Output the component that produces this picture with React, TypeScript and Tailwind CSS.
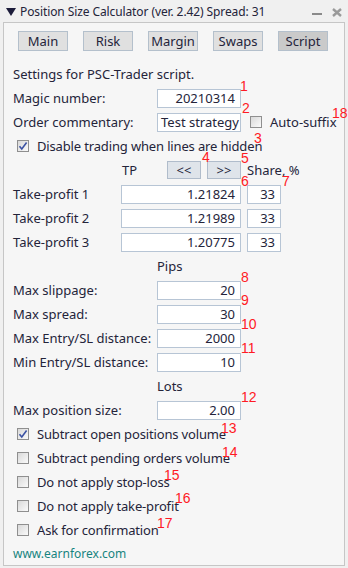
import type { ReactNode } from 'react';

const tabs = ['Main', 'Risk', 'Margin', 'Swaps', 'Script'];

function Check({ checked = false }: { checked?: boolean }) {
  return (
    <span className="flex h-[12px] w-[12px] shrink-0 items-center justify-center border border-[#8f8f8f] bg-gradient-to-br from-[#d9d9d9] to-[#fafafa]">
      {checked && (
        <svg width="10" height="10" viewBox="0 0 10 10">
          <path d="M1.5 5.2 L3.8 8 L8.6 1.6" fill="none" stroke="#3b52a3" strokeWidth="1.6" />
        </svg>
      )}
    </span>
  );
}

function Field({ value, w = 'w-[84px]', left = false }: { value: string; w?: string; left?: boolean }) {
  return (
    <div
      className={`flex h-[19px] items-center border border-[#b7c5d5] bg-white ${w} ${
        left ? 'justify-start pl-[3px]' : 'justify-end pr-[5px]'
      }`}
    >
      {value}
    </div>
  );
}

function Row({ children, h = 'h-[24px]' }: { children: ReactNode; h?: string }) {
  return <div className={`flex items-center ${h}`}>{children}</div>;
}

function LabeledField({ label, value }: { label: string; value: string }) {
  return (
    <Row>
      <span className="w-[144px]">{label}</span>
      <Field value={value} />
    </Row>
  );
}

function CheckRow({ label, checked }: { label: string; checked?: boolean }) {
  return (
    <Row>
      <span className="ml-[4px] mr-[8px] flex">
        <Check checked={checked} />
      </span>
      <span className="tracking-[-0.15px]">{label}</span>
    </Row>
  );
}

// red callout numbers drawn over the form
const marks: [string, number, number][] = [
  ['1', 240, 79],
  ['2', 242, 101],
  ['18', 332, 106],
  ['3', 254, 131],
  ['4', 202, 150],
  ['5', 241, 151],
  ['6', 241, 174],
  ['7', 282, 174],
  ['8', 241, 270],
  ['9', 241, 293],
  ['10', 241, 317],
  ['11', 241, 341],
  ['12', 241, 390],
  ['13', 221, 421],
  ['14', 222, 445],
  ['15', 164, 468],
  ['16', 175, 491],
  ['17', 157, 516],
];

export default function App() {
  return (
    <div className="relative h-[568px] w-[348px] overflow-hidden bg-[#f0f0f0] font-['Noto_Sans',sans-serif] text-[13px] leading-none text-[#24243a]">
      <div className="flex h-[22px] items-center pl-[6px] pt-[2px]">
        <svg width="10" height="8" viewBox="0 0 10 8" className="mr-[4px]">
          <polygon points="0,0 10,0 5,8" fill="#1c1c3a" />
        </svg>
        <span className="text-[12px] tracking-[-0.1px]">Position Size Calculator (ver. 2.42) Spread: 31</span>
        <div className="ml-auto mr-[6px] flex items-center gap-[10px]">
          <span className="mt-[4px] block h-[2px] w-[10px] bg-[#8a8a8a]" />
          <svg width="10" height="9" viewBox="0 0 10 9">
            <path d="M1 1 L9 8 M9 1 L1 8" stroke="#9a9a9a" strokeWidth="2.4" />
          </svg>
        </div>
      </div>

      <div className="mx-[3px] h-[544px] border border-[#c6c6c6] bg-[#f6f6f6] pl-[9px]">
        <div className="mt-[8px] flex gap-[15px] pl-[5px]">
          {tabs.map((t) => (
            <div
              key={t}
              className={`flex h-[20px] w-[50px] items-center justify-center border border-[#b4c0cc] ${
                t === 'Script' ? 'bg-[#cacaca]' : 'bg-[#e0e0e0]'
              }`}
            >
              {t}
            </div>
          ))}
        </div>

        <div className="mt-[12px]">
          <Row h="h-[23px]">Settings for PSC-Trader script.</Row>
          <LabeledField label="Magic number:" value="20210314" />
          <Row>
            <span className="w-[144px]">Order commentary:</span>
            <Field value="Test strategy" left />
            <span className="ml-[9px] mr-[8px] flex">
              <Check />
            </span>
            <span>Auto-suffix</span>
          </Row>
          <CheckRow label="Disable trading when lines are hidden" checked />
          <Row>
            <span className="w-[108px]" />
            <span className="w-[46px] pl-[1px]">TP</span>
            <div className="flex h-[18px] w-[34px] items-center justify-center border border-[#b0bccb] bg-[#dfe4ea]">
              &lt;&lt;
            </div>
            <div className="ml-[6px] flex h-[18px] w-[34px] items-center justify-center border border-[#b0bccb] bg-[#dfe4ea]">
              &gt;&gt;
            </div>
            <span className="ml-[6px]">Share, %</span>
          </Row>
          {['1.21824', '1.21989', '1.20775'].map((v, i) => (
            <Row key={v}>
              <span className="w-[108px]">Take-profit {i + 1}</span>
              <Field value={v} w="w-[120px]" />
              <span className="ml-[6px]">
                <Field value="33" w="w-[34px]" />
              </span>
            </Row>
          ))}
          <Row>
            <span className="pl-[144px]">Pips</span>
          </Row>
          <LabeledField label="Max slippage:" value="20" />
          <LabeledField label="Max spread:" value="30" />
          <LabeledField label="Max Entry/SL distance:" value="2000" />
          <LabeledField label="Min Entry/SL distance:" value="10" />
          <Row>
            <span className="pl-[144px]">Lots</span>
          </Row>
          <LabeledField label="Max position size:" value="2.00" />
          <CheckRow label="Subtract open positions volume" checked />
          <CheckRow label="Subtract pending orders volume" />
          <CheckRow label="Do not apply stop-loss" />
          <CheckRow label="Do not apply take-profit" />
          <CheckRow label="Ask for confirmation" />
          <Row h="h-[24px]">
            <span className="text-[12px] text-[#16847f]">www.earnforex.com</span>
          </Row>
        </div>
      </div>

      {marks.map(([n, x, y]) => (
        <span
          key={n}
          className="absolute font-['Liberation_Sans',sans-serif] text-[14px] leading-none text-[#ff1a24]"
          style={{ left: x, top: y }}
        >
          {n}
        </span>
      ))}
    </div>
  );
}
